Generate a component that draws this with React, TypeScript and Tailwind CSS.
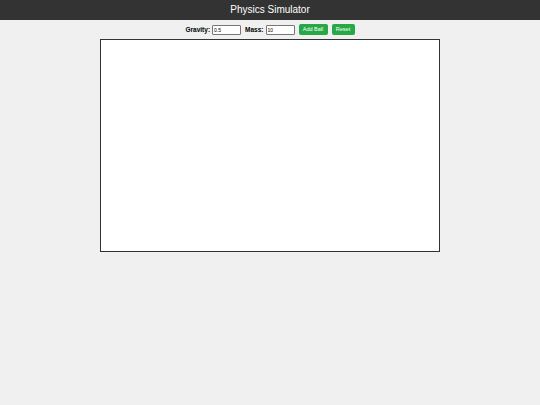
import React from 'react'

function App() {
  return (
    <div className="min-h-[405px] bg-[#f0f0f0]" style={{ fontFamily: '"Liberation Sans", Arial, sans-serif' }}>
      <header className="h-[20px] bg-[#333333] text-white text-[10px] leading-[20px] text-center">
        Physics Simulator
      </header>
      <div className="flex items-center justify-center h-[19px]">
        <label className="text-[6.5px] font-bold text-black">Gravity:</label>
        <input
          defaultValue="0.5"
          className="ml-[2px] w-[29px] h-[10px] bg-white border border-[#767676] rounded-[1px] text-[5px] px-[1px] outline-none"
        />
        <label className="ml-[4px] text-[6.5px] font-bold text-black">Mass:</label>
        <input
          defaultValue="10"
          className="ml-[2px] w-[29px] h-[10px] bg-white border border-[#767676] rounded-[1px] text-[5px] px-[1px] outline-none"
        />
        <button className="ml-[4px] h-[11px] w-[29px] bg-[#28a745] text-white text-[5.5px] rounded-[2px]">
          Add Ball
        </button>
        <button className="ml-[4px] h-[11px] w-[23px] bg-[#28a745] text-white text-[5.5px] rounded-[2px]">
          Reset
        </button>
      </div>
      <div className="flex justify-center">
        <div className="w-[340px] h-[213px] bg-white border border-[#333333]" />
      </div>
    </div>
  )
}

export default App
